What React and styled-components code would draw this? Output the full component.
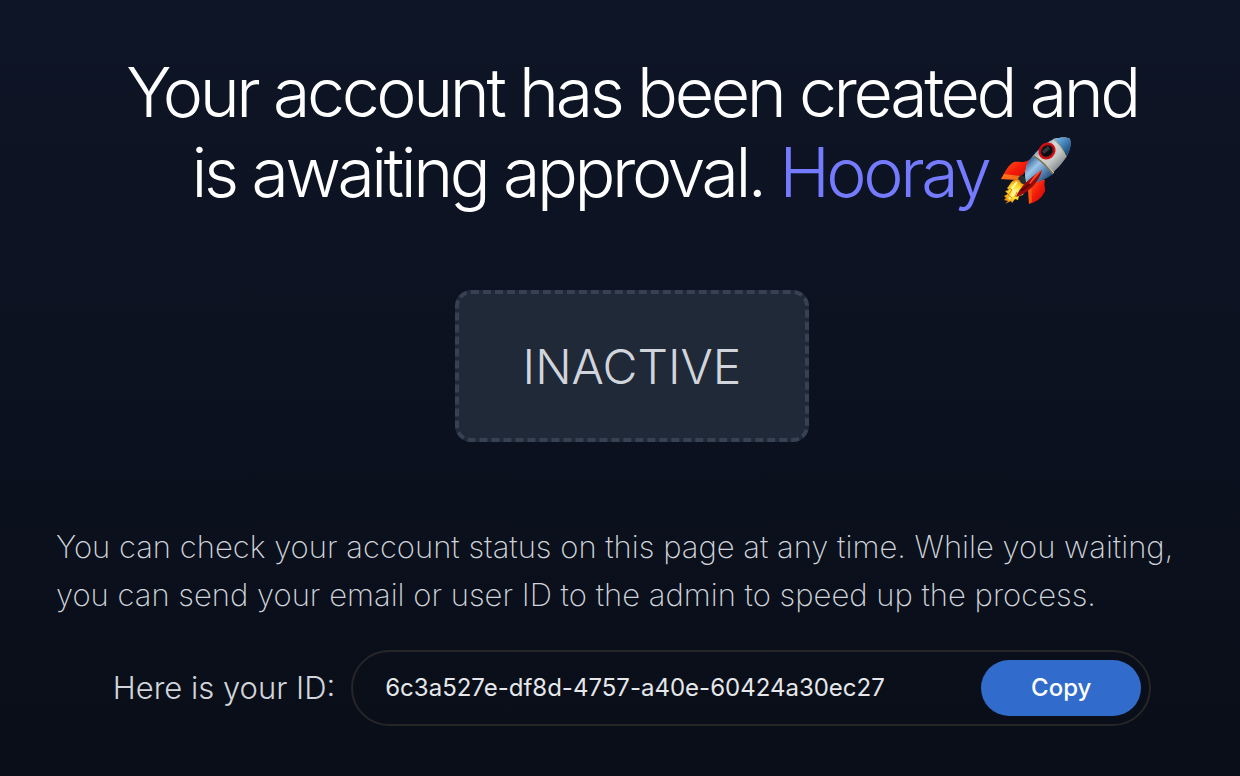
import React, { useId, useState } from "react";
import styled, { createGlobalStyle } from "styled-components";

const GlobalStyle = createGlobalStyle`
  *, *::before, *::after { box-sizing: border-box; }
  html { background: #090e18; }
  body {
    margin: 0;
    color: #d1d5db;
    font-family: Inter, "Liberation Sans", sans-serif;
  }
  h1, p { margin: 0; }
`;

const Page = styled.main`
  min-height: 100vh;
  padding: 52px 32px 48px 56px;
  display: flex;
  flex-direction: column;
  align-items: center;
  background: linear-gradient(#0e1526, #090e18);
`;

const Title = styled.h1`
  color: #fff;
  font-size: 68px;
  font-weight: 300;
  line-height: 80px;
  letter-spacing: -0.05em;
  text-align: center;
`;

const TitleLine = styled.span`
  display: block;
`;

const Accent = styled.span`
  color: #747bff;
`;

const RocketIcon = styled.svg`
  width: 72px;
  height: 70px;
  margin-left: 12px;
  vertical-align: -10px;
`;

const StatusCard = styled.div`
  margin-top: 78px;
  padding: 37px 64px 35px;
  border: 4px dashed #374151;
  border-radius: 16px;
  background: #1f2937;
  font-size: 48px;
  font-weight: 300;
  line-height: 72px;
`;

const Hint = styled.p`
  width: 100%;
  margin-top: 81px;
  font-size: 31px;
  font-weight: 200;
  line-height: 48px;
`;

const IdRow = styled.div`
  width: 100%;
  margin-top: 31px;
  display: flex;
  align-items: center;
  justify-content: center;
  gap: 16px;
`;

const IdLabel = styled.label`
  font-size: 31px;
  font-weight: 300;
  line-height: 48px;
  white-space: nowrap;
`;

const IdBox = styled.div`
  flex: 0 1 800px;
  min-width: 0;
  padding: 8px 8px 8px 32px;
  display: flex;
  align-items: center;
  border: 2px solid #262628;
  border-radius: 38px;
`;

const IdInput = styled.input`
  flex: 1;
  min-width: 0;
  padding: 0;
  border: 0;
  outline: 0;
  background: transparent;
  color: #e5e7eb;
  font: 400 24px/32px Inter, "Liberation Sans", sans-serif;
`;

const CopyButton = styled.button`
  flex: none;
  width: 160px;
  height: 56px;
  padding: 0;
  border: 0;
  border-radius: 28px;
  background: #316ccd;
  color: #fff;
  font: 500 24px/32px Inter, "Liberation Sans", sans-serif;
  cursor: pointer;
`;

function Rocket() {
  return (
    <RocketIcon viewBox="0 0 72 70" role="img" aria-label="Rocket">
      <defs>
        <linearGradient id="body" x1="32" y1="14" x2="56" y2="38" gradientUnits="userSpaceOnUse">
          <stop offset="0" stopColor="#5e87ab" />
          <stop offset="0.3" stopColor="#d3d8d9" />
          <stop offset="0.6" stopColor="#c4c7c6" />
          <stop offset="1" stopColor="#747b80" />
        </linearGradient>
        <linearGradient id="steel" x1="28" y1="23" x2="48" y2="43" gradientUnits="userSpaceOnUse">
          <stop offset="0" stopColor="#315f93" />
          <stop offset="0.35" stopColor="#9bc5e8" />
          <stop offset="0.7" stopColor="#5580ad" />
          <stop offset="1" stopColor="#254a78" />
        </linearGradient>
        <linearGradient id="nose" x1="54" y1="1" x2="70" y2="17" gradientUnits="userSpaceOnUse">
          <stop offset="0" stopColor="#88b8da" />
          <stop offset="0.4" stopColor="#4b8dc4" />
          <stop offset="1" stopColor="#163f70" />
        </linearGradient>
        <linearGradient id="fin" x1="0" y1="0" x2="1" y2="1">
          <stop offset="0" stopColor="#ff6a16" />
          <stop offset="0.5" stopColor="#f51b0b" />
          <stop offset="1" stopColor="#b80805" />
        </linearGradient>
        <radialGradient id="flame">
          <stop offset="0" stopColor="#fff78d" />
          <stop offset="0.55" stopColor="#ffdc26" />
          <stop offset="1" stopColor="#f0920c" />
        </radialGradient>
      </defs>
      <path d="M31 22C23 27 18 24 14 25C8 28 5 35 1 42L18 43L26 34Z" fill="url(#fin)" />
      <path d="M1 42L18 43L21 39L4 37Z" fill="#ff9c25" opacity="0.65" />
      <path d="M45 43C43 50 47 52 44 56C40 63 35 65 29 67L28 50L37 43Z" fill="url(#fin)" />
      <path d="M29 67L28 50L31 47L32 65Z" fill="#ff6b0b" opacity="0.7" />
      <path d="M15 43C10 44 10 49 7 51L9 53L5 54L8 57L4 59L6 61L4 63L8 64L5 67L11 64L12 66L15 62L18 63L19 59L23 58L26 50L24 43Z" fill="url(#flame)" />
      <path d="M17 45L12 51L14 56L9 62M23 50L16 58" fill="none" stroke="#fff59a" strokeWidth="2" />
      <path d="M9 51L12 53L8 58L12 61M17 55L15 60" fill="none" stroke="#e87b05" strokeWidth="1" />
      <path d="M21 38L18 41L21 46L27 49L33 44Z" fill="#252d33" />
      <path d="M27 27C34 16 43 7 54 2C61 0 68 0 70 2C72 10 68 19 62 26C55 35 46 42 35 46L26 45L25 36Z" fill="url(#body)" />
      <path d="M27 27Q29 22 34 19Q43 24 53 37Q45 43 35 46L26 44L25 36Z" fill="url(#steel)" />
      <path d="M34 19Q44 25 53 37" fill="none" stroke="#747568" strokeWidth="2" />
      <path d="M35 18Q45 25 54 36" fill="none" stroke="#dacc98" strokeWidth="1" />
      <path d="M53 2C61 0 68 0 70 2C72 9 69 16 66 20Q62 10 53 2Z" fill="url(#nose)" />
      <path d="M53 2Q62 9 66 20" fill="none" stroke="#cbb576" strokeWidth="1" />
      <ellipse cx="47" cy="14" rx="9" ry="8" transform="rotate(-40 47 14)" fill="#d60d12" />
      <ellipse cx="47" cy="14" rx="7" ry="6" transform="rotate(-40 47 14)" fill="#6d171b" />
      <ellipse cx="47" cy="14" rx="6" ry="5" transform="rotate(-40 47 14)" fill="#080d12" />
      <path d="M42 14L48 9L50 12L44 17Z" fill="#4a5356" opacity="0.65" />
      <path d="M42 33C39 45 29 56 16 60C19 51 28 42 42 33Z" fill="#9a0909" />
      <path d="M42 33C39 37 33 44 27 50C31 42 36 36 42 33Z" fill="#ff4726" />
      <path d="M21 54L30 47" fill="none" stroke="#540808" strokeWidth="2" />
    </RocketIcon>
  );
}

export default function App() {
  const id = useId();
  const [userId] = useState("6c3a527e-df8d-4757-a40e-60424a30ec27");

  return (
    <>
      <GlobalStyle />
      <Page>
        <Title>
          <TitleLine>Your account has been created and</TitleLine>
          <TitleLine>
            is awaiting approval. <Accent>Hooray</Accent>
            <Rocket />
          </TitleLine>
        </Title>
        <StatusCard role="status">INACTIVE</StatusCard>
        <Hint>
          You can check your account status on this page at any time. While you waiting, you can
          send your email or user ID to the admin to speed up the process.
        </Hint>
        <IdRow>
          <IdLabel htmlFor={id}>Here is your ID:</IdLabel>
          <IdBox>
            <IdInput id={id} type="text" readOnly value={userId} />
            <CopyButton type="button" onClick={() => navigator.clipboard?.writeText(userId)}>
              Copy
            </CopyButton>
          </IdBox>
        </IdRow>
      </Page>
    </>
  );
}
